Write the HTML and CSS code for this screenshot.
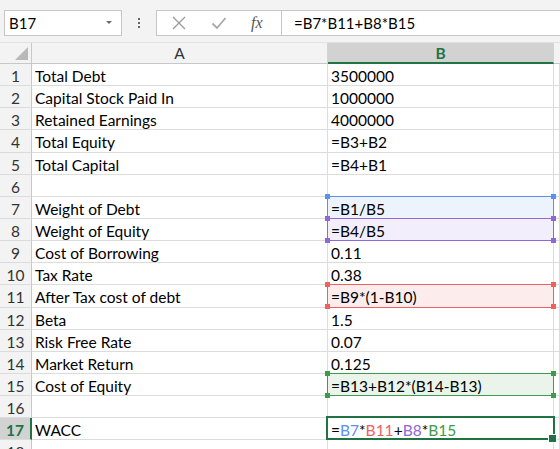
FILE: index.html
```html
<!DOCTYPE html>
<html lang="en">

<head>
    <meta charset="UTF-8">
    <meta name="viewport" content="width=device-width, initial-scale=1.0">
    <title>WACC</title>
    <link rel="stylesheet" href="styles.css">
</head>

<body>
    <div class="bar">
        <div class="namebox">
            <span>B17</span>
            <span class="caret"></span>
        </div>
        <div class="grip"><i></i><i></i><i></i></div>
        <div class="fxbox">
            <svg class="icon" width="16" height="16" viewBox="0 0 16 16">
                <path d="M2 2 L14 14 M14 2 L2 14" stroke="#9a9a9a" stroke-width="1.3" fill="none" />
            </svg>
            <svg class="icon" width="16" height="16" viewBox="0 0 16 16">
                <path d="M1.5 8.5 L6 13 L14.5 3" stroke="#a8a8a8" stroke-width="1.8" fill="none" />
            </svg>
            <span class="fx">fx</span>
        </div>
        <div class="formula">=B7*B11+B8*B15</div>
    </div>

    <div class="sheet">
        <div class="corner"><span class="tri"></span></div>
        <div class="colhead">A</div>
        <div class="colhead sel">B</div>
        <div class="colhead rest"></div>

        <div class="rh">1</div><div class="c">Total Debt</div><div class="c">3500000</div><div class="c"></div>
        <div class="rh">2</div><div class="c">Capital Stock Paid In</div><div class="c">1000000</div><div class="c"></div>
        <div class="rh">3</div><div class="c">Retained Earnings</div><div class="c">4000000</div><div class="c"></div>
        <div class="rh">4</div><div class="c">Total Equity</div><div class="c">=B3+B2</div><div class="c"></div>
        <div class="rh">5</div><div class="c">Total Capital</div><div class="c">=B4+B1</div><div class="c"></div>
        <div class="rh">6</div><div class="c"></div><div class="c"></div><div class="c"></div>
        <div class="rh">7</div><div class="c">Weight of Debt</div><div class="c ref blue">=B1/B5</div><div class="c"></div>
        <div class="rh">8</div><div class="c">Weight of Equity</div><div class="c ref purple">=B4/B5</div><div class="c"></div>
        <div class="rh">9</div><div class="c">Cost of Borrowing</div><div class="c">0.11</div><div class="c"></div>
        <div class="rh">10</div><div class="c">Tax Rate</div><div class="c">0.38</div><div class="c"></div>
        <div class="rh">11</div><div class="c">After Tax cost of debt</div><div class="c ref red">=B9*(1-B10)</div><div class="c"></div>
        <div class="rh">12</div><div class="c">Beta</div><div class="c">1.5</div><div class="c"></div>
        <div class="rh">13</div><div class="c">Risk Free Rate</div><div class="c">0.07</div><div class="c"></div>
        <div class="rh">14</div><div class="c">Market Return</div><div class="c">0.125</div><div class="c"></div>
        <div class="rh">15</div><div class="c">Cost of Equity</div><div class="c ref green">=B13+B12*(B14-B13)</div><div class="c"></div>
        <div class="rh">16</div><div class="c"></div><div class="c"></div><div class="c"></div>
        <div class="rh active">17</div><div class="c">WACC</div><div class="c current">=<span class="t-blue">B7</span>*<span class="t-red">B11</span>+<span class="t-purple">B8</span>*<span class="t-green">B15</span></div><div class="c"></div>
        <div class="rh">18</div><div class="c"></div><div class="c"></div><div class="c"></div>
    </div>
</body>

</html>
```

FILE: styles.css
```css
* {
    box-sizing: border-box;
}

body {
    margin: 0;
    width: 560px;
    height: 449px;
    overflow: hidden;
    background: #ffffff;
    font-family: Lato, "Liberation Sans", sans-serif;
    font-size: 15.5px;
    color: #000000;
}

/* formula bar */

.bar {
    display: flex;
    align-items: center;
    height: 43px;
    padding: 3px 0 0 4px;
    background: #f3f3f3;
    border-bottom: 1px solid #e2e2e2;
    font-size: 15px;
}

.namebox {
    display: flex;
    align-items: center;
    justify-content: space-between;
    width: 118px;
    height: 26px;
    padding: 0 9px 0 4px;
    background: #ffffff;
    border: 1px solid #c6c6c6;
}

.caret {
    width: 0;
    height: 0;
    border-left: 3px solid transparent;
    border-right: 3px solid transparent;
    border-top: 3px solid #6b6b6b;
}

.grip {
    display: flex;
    flex-direction: column;
    gap: 2px;
    width: 34px;
    align-items: center;
}

.grip i {
    width: 2px;
    height: 2px;
    background: #666666;
}

.fxbox {
    display: flex;
    align-items: center;
    width: 126px;
    height: 26px;
    padding-left: 14px;
    gap: 24px;
    background: #ffffff;
    border: 1px solid #c6c6c6;
}

.fx {
    font-family: "Liberation Serif", serif;
    font-style: italic;
    font-size: 16px;
    color: #555555;
}

.formula {
    flex: 1;
    height: 26px;
    padding: 3px 0 0 12px;
    margin-left: -1px;
    background: #ffffff;
    border: 1px solid #c6c6c6;
    border-right: none;
}

/* sheet */

.sheet {
    display: grid;
    grid-template-columns: 32px 296px 226px 1fr;
    grid-template-rows: 21px;
    grid-auto-rows: 22.15px;
}

.corner {
    position: relative;
    background: #f3f3f3;
    border-right: 1px solid #c8c8c8;
    border-bottom: 1px solid #c8c8c8;
}

.tri {
    position: absolute;
    right: 3px;
    bottom: 3px;
    width: 0;
    height: 0;
    border-left: 13px solid transparent;
    border-bottom: 13px solid #b8b8b8;
}

.colhead {
    text-align: center;
    line-height: 21px;
    color: #333333;
    background: #f3f3f3;
    border-right: 1px solid #d4d4d4;
    border-bottom: 1px solid #c8c8c8;
}

.colhead.sel {
    background: #d2d2d2;
    color: #217346;
    font-weight: bold;
    border-bottom: 2px solid #217346;
}

.colhead.rest {
    border-right: none;
}

.rh {
    text-align: center;
    line-height: 25px;
    color: #333333;
    background: #f3f3f3;
    border-right: 1px solid #c8c8c8;
    border-bottom: 1px solid #dcdcdc;
}

.rh.active {
    background: #d2d2d2;
    color: #217346;
    font-weight: bold;
    border-right: 2px solid #217346;
}

.c {
    padding-left: 3px;
    line-height: 25px;
    white-space: nowrap;
    border-right: 1px solid #dcdcdc;
    border-bottom: 1px solid #dcdcdc;
}

/* reference highlight boxes */

.ref {
    position: relative;
}

.ref::before {
    content: "";
    position: absolute;
    top: -1px;
    left: -1px;
    right: -1px;
    bottom: -1px;
    border: 1px solid currentColor;
}

.ref::after {
    content: "";
    position: absolute;
    top: -3px;
    left: -3px;
    width: 5px;
    height: 5px;
    background: currentColor;
    box-shadow: 226px 0 0 currentColor, 0 22px 0 currentColor, 226px 22px 0 currentColor;
}

.blue {
    color: #5b8ff0;
    background: #edf3fd;
}

.purple {
    color: #9067d4;
    background: #f2eefb;
}

.red {
    color: #ee6161;
    background: #fdecec;
}

.green {
    color: #3e9a4c;
    background: #ebf4ea;
}

.ref.blue,
.ref.purple,
.ref.red,
.ref.green {
    -webkit-text-fill-color: #000000;
}

.current {
    position: relative;
}

.current::before {
    content: "";
    position: absolute;
    top: -2px;
    left: -2px;
    right: -2px;
    bottom: -1px;
    border: 2px solid #217346;
}

.current::after {
    content: "";
    position: absolute;
    right: -4px;
    bottom: -4px;
    width: 7px;
    height: 7px;
    background: #217346;
    border: 1px solid #ffffff;
}

.t-blue {
    color: #5b8ff0;
}

.t-red {
    color: #ee6161;
}

.t-purple {
    color: #9067d4;
}

.t-green {
    color: #3e9a4c;
}
```
